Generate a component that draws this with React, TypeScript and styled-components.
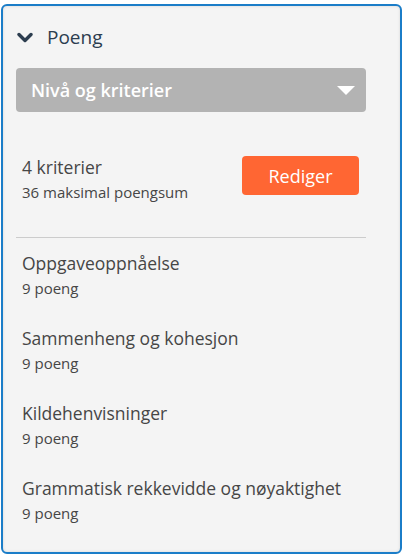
import React from "react";
import styled, { createGlobalStyle } from "styled-components";

const Global = createGlobalStyle`
  html, body { margin: 0; padding: 0; background: #ffffff; }
  body { font-family: "Open Sans", "Liberation Sans", sans-serif; }
  * { box-sizing: border-box; }
`;

const Panel = styled.section`
  margin: 4px 0 0 1px;
  width: 401px;
  height: 550px;
  border: 2px solid #1b7dc8;
  border-radius: 6px;
  background: #f4f4f4;
  box-shadow: inset 0 0 3px rgba(0, 0, 0, 0.12);
  padding: 0 34px 0 13px;
`;

const Header = styled.div`
  display: flex;
  align-items: center;
  gap: 14px;
  height: 62px;
  padding-left: 1px;
  color: #2c3d4f;
  font-size: 19px;
`;

const Select = styled.div`
  display: flex;
  align-items: center;
  justify-content: space-between;
  height: 44px;
  border-radius: 4px;
  background: #b3b3b3;
  color: #ffffff;
  font-size: 18px;
  font-weight: 600;
  padding: 0 11px 0 15px;
`;

const Summary = styled.div`
  display: flex;
  justify-content: space-between;
  align-items: flex-start;
  padding: 44px 7px 35px 6px;
  border-bottom: 1px solid #cccccc;
`;

const Title = styled.div`
  font-size: 17.5px;
  color: #464646;
  line-height: 23px;
`;

const Sub = styled.div`
  font-size: 15px;
  color: #464646;
  line-height: 20px;
  margin-top: 3px;
`;

const Button = styled.button`
  width: 117px;
  height: 39px;
  border: none;
  border-radius: 4px;
  background: #ff6633;
  color: #ffffff;
  font-family: inherit;
  font-size: 18px;
  font-weight: 500;
  padding: 0;
`;

const List = styled.div`
  display: flex;
  flex-direction: column;
  padding: 14px 6px 0;
  gap: 29px;
`;

const Item = styled.div`
  display: flex;
  flex-direction: column;
`;

const items = [
  "Oppgaveoppnåelse",
  "Sammenheng og kohesjon",
  "Kildehenvisninger",
  "Grammatisk rekkevidde og nøyaktighet",
];

export default function App() {
  return (
    <>
      <Global />
      <Panel>
        <Header>
          <svg width="16" height="11" viewBox="0 0 16 11">
            <path d="M2 2.5 L8 8.5 L14 2.5" stroke="#2c3d4f" strokeWidth="3.4" fill="none" strokeLinecap="round" strokeLinejoin="round" />
          </svg>
          <span>Poeng</span>
        </Header>
        <Select>
          <span>Nivå og kriterier</span>
          <svg width="18" height="9" viewBox="0 0 18 9">
            <path d="M0 0 H18 L9 9 Z" fill="#ffffff" />
          </svg>
        </Select>
        <Summary>
          <div>
            <Title>4 kriterier</Title>
            <Sub>36 maksimal poengsum</Sub>
          </div>
          <Button>Rediger</Button>
        </Summary>
        <List>
          {items.map((t) => (
            <Item key={t}>
              <Title>{t}</Title>
              <Sub>9 poeng</Sub>
            </Item>
          ))}
        </List>
      </Panel>
    </>
  );
}
